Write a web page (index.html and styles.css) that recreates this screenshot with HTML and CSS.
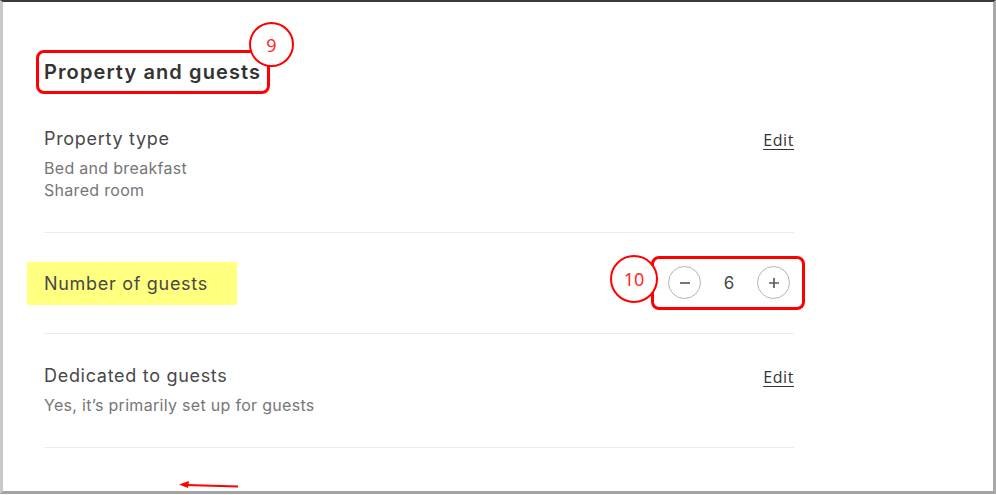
FILE: index.html
```html
<!DOCTYPE html>
<html>
<head>
<meta charset="utf-8">
<link rel="stylesheet" href="styles.css">
</head>
<body>
<div class="frame">
  <div class="content">
    <div class="heading-wrap">
      <h2 class="heading">Property and guests</h2>
      <span class="badge badge-9">9</span>
    </div>

    <div class="row row-first">
      <div class="info">
        <div class="title">Property type</div>
        <div class="sub">Bed and breakfast</div>
        <div class="sub">Shared room</div>
      </div>
      <a class="edit">Edit</a>
    </div>

    <div class="row row-guests">
      <div class="title highlight">Number of guests</div>
      <div class="stepper-wrap">
        <span class="badge badge-10">10</span>
        <div class="stepper">
          <button class="step-btn" aria-label="decrease">
            <svg width="12" height="12" viewBox="0 0 12 12"><path d="M1 6h10" stroke="#5e5e5e" stroke-width="1.7"/></svg>
          </button>
          <span class="count">6</span>
          <button class="step-btn" aria-label="increase">
            <svg width="12" height="12" viewBox="0 0 12 12"><path d="M1 6h10M6 1v10" stroke="#5e5e5e" stroke-width="1.7"/></svg>
          </button>
        </div>
      </div>
    </div>

    <div class="row row-last">
      <div class="info">
        <div class="title">Dedicated to guests</div>
        <div class="sub">Yes, it’s primarily set up for guests</div>
      </div>
      <a class="edit">Edit</a>
    </div>
  </div>
  <svg class="arrow" width="64" height="10" viewBox="0 0 64 10">
    <path d="M8 5 L60 6.5" stroke="#ff0000" stroke-width="2"/>
    <path d="M1 4.5 L11 1 L10 8 Z" fill="#ff0000"/>
  </svg>
</div>
</body>
</html>
```
FILE: styles.css
```css
* { box-sizing: border-box; }
html, body { margin: 0; padding: 0; background: #ffffff; }
body { font-family: "Inter", "Noto Sans", sans-serif; color: #484848; }

.frame {
  position: relative;
  width: 996px;
  height: 494px;
  border-top: 2px solid #3a3a3a;
  border-left: 3px solid #c9c9c9;
  border-right: 3px solid #a9a9a9;
  border-bottom: 3px solid #a3a3a3;
  overflow: hidden;
}

.content {
  width: 791px;
  padding-left: 41px;
  padding-top: 48px;
}

.heading-wrap { position: relative; display: inline-block; margin-left: -8px; }
.heading {
  margin: 0;
  display: inline-block;
  font-size: 20px;
  font-weight: 600;
  line-height: 24px;
  letter-spacing: 1.1px;
  color: #333;
  padding: 7px 6px 7px 5px;
  border: 3px solid #ff0000;
  border-radius: 8px;
}

.badge {
  position: absolute;
  display: flex;
  align-items: center;
  justify-content: center;
  background: #fff;
  border: 2px solid #ff0000;
  border-radius: 50%;
  color: #ff2a2a;
  font-family: "Noto Sans", sans-serif;
}
.badge-9 { width: 45px; height: 45px; left: 213px; top: -28px; font-size: 18px; }
.badge-10 { width: 48px; height: 48px; left: -41px; top: -1px; font-size: 18px; z-index: 2; }

.row {
  display: flex;
  justify-content: space-between;
  border-bottom: 1px solid #ebebeb;
}
.row-first { padding: 33px 0 31px; align-items: flex-start; }
.row-guests { height: 101px; align-items: center; }
.row-last { padding: 30px 0 31px; align-items: flex-start; }

.title { font-size: 18px; line-height: 24px; color: #484848; letter-spacing: 0.7px; }
.sub { font-size: 16px; line-height: 22px; color: #767676; letter-spacing: 0.3px; }
.title + .sub { margin-top: 6px; }

.edit {
  font-family: "Open Sans", sans-serif;
  font-size: 16px;
  line-height: 24px;
  letter-spacing: 0.6px;
  color: #333;
  text-decoration: underline;
  text-underline-offset: 3px;
  margin-top: 1px;
}

.highlight {
  background: #ffff80;
  margin-left: -17px;
  padding: 10px 29px 9px 17px;
}

.stepper-wrap { position: relative; margin-right: -11px; }
.stepper {
  display: flex;
  align-items: center;
  border: 3px solid #ff0000;
  border-radius: 8px;
  padding: 7px 12px 8px 14px;
}
.step-btn {
  width: 33px;
  height: 33px;
  border-radius: 50%;
  border: 1px solid #b5b5b5;
  background: #fff;
  display: flex;
  align-items: center;
  justify-content: center;
  padding: 0;
}
.count {
  width: 56px;
  text-align: center;
  font-size: 17px;
  color: #484848;
}

.arrow { position: absolute; left: 175px; top: 478px; }
```
